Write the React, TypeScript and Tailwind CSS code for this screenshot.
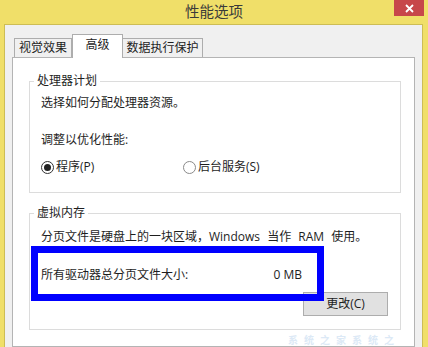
const FONT = "font-['Open_Sans','Noto_Sans_CJK_SC',sans-serif]";

function Radio({ checked }: { checked?: boolean }) {
  return (
    <span
      className={
        "flex h-[13px] w-[13px] items-center justify-center rounded-full border bg-white " +
        (checked ? "border-[#333333]" : "border-[#8a8a8a]")
      }
    >
      {checked && <span className="h-[7px] w-[7px] rounded-full bg-[#222222]" />}
    </span>
  );
}

function GroupBox({
  title,
  className,
  children,
}: {
  title: string;
  className?: string;
  children: React.ReactNode;
}) {
  return (
    <fieldset className={"m-0 border border-[#dcdcdc] p-0 " + (className ?? "")}>
      <legend className="ml-[4px] px-[3px] text-[12px] leading-[16px] text-[#1e1e1e]">
        {title}
      </legend>
      {children}
    </fieldset>
  );
}

export default function App() {
  return (
    <div
      className={`relative flex h-[347px] w-[428px] flex-col overflow-hidden bg-[#f0df69] text-[12px] leading-[16px] text-[#1e1e1e] ${FONT}`}
    >
      {/* title bar */}
      <div className="relative flex h-[24px] shrink-0 items-center justify-center">
        <span className="text-[14.5px] text-[#3a3a3a]">性能选项</span>
        <button className="absolute right-[4px] top-0 flex h-[16px] w-[30px] items-center justify-center bg-[#c7474a]">
          <svg width="9" height="9" viewBox="0 0 9 9">
            <path d="M1 1L8 8M8 1L1 8" stroke="#ffffff" strokeWidth="1.8" />
          </svg>
        </button>
      </div>

      {/* window body */}
      <div className="ml-[4px] mr-[5px] flex flex-1 flex-col border-l border-r border-t border-[#cdbd55] bg-[#f0f0f0] pl-[7px] pr-[7px] pt-[9px]">
        {/* tabs */}
        <div className="relative z-10 -mb-px flex h-[24px] items-end pl-[2px]">
          <div className="mb-px flex h-[19px] w-[58px] items-center justify-center border border-b-0 border-[#adadad] bg-[#f0f0f0]">
            视觉效果
          </div>
          <div className="flex h-[24px] w-[51px] items-start justify-center border border-b-0 border-[#adadad] bg-white pt-[2px]">
            高级
          </div>
          <div className="mb-px flex h-[19px] w-[80px] items-center justify-center border border-b-0 border-l-0 border-[#adadad] bg-[#f0f0f0]">
            数据执行保护
          </div>
        </div>

        {/* tab page */}
        <div className="flex-1 border border-[#b4b4b4] bg-white pl-[16px] pr-[13px] pt-[15px]">
          <GroupBox title="处理器计划" className="pb-[17px]">
            <div className="pl-[11px]">
              <p className="mt-[6px]">选择如何分配处理器资源。</p>
              <p className="mt-[21px]">调整以优化性能:</p>
              <div className="mt-[11px] flex h-[16px] items-center">
                <div className="flex w-[142px] items-center gap-[2px]">
                  <Radio checked />
                  <span>程序(P)</span>
                </div>
                <div className="flex items-center gap-[2px]">
                  <Radio />
                  <span>后台服务(S)</span>
                </div>
              </div>
            </div>
          </GroupBox>

          <GroupBox title="虚拟内存" className="mt-[12px] pb-[13px]">
            <div className="pl-[11px]">
              <p className="mt-[8px] whitespace-nowrap [word-spacing:4px]">
                分页文件是硬盘上的一块区域，Windows 当作 RAM 使用。
              </p>
              <div className="mt-[22px] flex w-[261px] justify-between">
                <span>所有驱动器总分页文件大小:</span>
                <span>0 MB</span>
              </div>
            </div>
            <div className="mt-[9px] flex justify-end pr-[12px]">
              <button className="flex h-[24px] w-[85px] items-center justify-center border border-[#adadad] bg-[#e1e1e1] text-[12px] text-[#1e1e1e]">
                更改(C)
              </button>
            </div>
          </GroupBox>
        </div>
      </div>

      {/* annotation frame */}
      <div className="absolute left-[31px] top-[246px] h-[55px] w-[293px] border-[7px] border-[#0000ff]" />

      {/* faint watermark */}
      <div className="absolute left-[288px] top-[335px] whitespace-nowrap text-[10px] font-bold leading-[11px] tracking-[6px] text-[#dce9f6]">
        系统之家系统之
      </div>
    </div>
  );
}
